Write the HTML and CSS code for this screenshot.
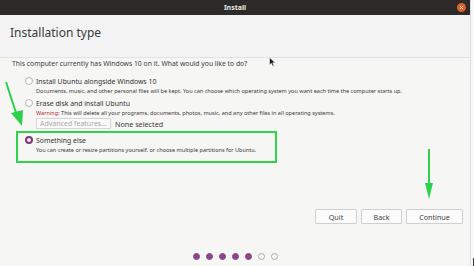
FILE: index.html
```html
<!DOCTYPE html>
<html>
<head>
<meta charset="utf-8">
<link rel="stylesheet" href="styles.css">
</head>
<body>
<div class="screen">
  <div class="app">
    <div class="titlebar">
      <span class="tb-spacer"></span>
      <span class="tb-title">Install</span>
      <span class="tb-close"><svg width="9" height="9" viewBox="0 0 9 9"><circle cx="4.5" cy="4.5" r="4.5" fill="#e0622a"/><path d="M3 3L6 6M6 3L3 6" stroke="#fbe0d0" stroke-width="1"/></svg></span>
    </div>
    <div class="header">Installation type</div>
    <div class="content">
      <p class="question">This computer currently has Windows 10 on it. What would you like to do?</p>
      <div class="option first">
        <div class="opt-row"><span class="radio"></span><span class="opt-label">Install Ubuntu alongside Windows 10</span></div>
        <div class="opt-desc">Documents, music, and other personal files will be kept. You can choose which operating system you want each time the computer starts up.</div>
      </div>
      <div class="option">
        <div class="opt-row"><span class="radio"></span><span class="opt-label">Erase disk and install Ubuntu</span></div>
        <div class="opt-desc"><span class="warn">Warning</span>: This will delete all your programs, documents, photos, music, and any other files in all operating systems.</div>
        <div class="adv-row"><span class="adv-btn">Advanced features...</span><span class="adv-note">None selected</span></div>
      </div>
      <div class="highlight">
        <div class="opt-row"><span class="radio checked"></span><span class="opt-label">Something else</span></div>
        <div class="opt-desc">You can create or resize partitions yourself, or choose multiple partitions for Ubuntu.</div>
      </div>
      <div class="buttons">
        <span class="btn btn-quit">Quit</span>
        <span class="btn btn-back">Back</span>
        <span class="btn btn-continue">Continue</span>
      </div>
      <div class="dots">
        <span class="dot on"></span><span class="dot on"></span><span class="dot on"></span><span class="dot on"></span><span class="dot on"></span><span class="dot"></span><span class="dot"></span>
      </div>
    </div>
    <svg class="arrow arrow-left" width="30" height="60" viewBox="0 0 30 60">
      <path d="M3 2L14 36" stroke="#2bd14a" stroke-width="2"/>
      <path d="M8 33L19 46L20 30Z" fill="#2bd14a"/>
    </svg>
    <svg class="arrow arrow-right" width="12" height="52" viewBox="0 0 12 52">
      <path d="M6 0V36" stroke="#2bd14a" stroke-width="2"/>
      <path d="M2 34L6 50L10 34Z" fill="#2bd14a"/>
    </svg>
    <svg class="cursor" width="7" height="10" viewBox="0 0 7 10">
      <path d="M0.5 0.5V8L2.4 6.3L3.8 9.3L5 8.7L3.7 5.8H6.3Z" fill="#1a1a1a" stroke="#f0f0f0" stroke-width="0.6"/>
    </svg>
  </div>
  <div class="edge"><span class="edge-mark"></span></div>
</div>
</body>
</html>
```
FILE: styles.css
```css
* { box-sizing: border-box; }
html, body { margin: 0; padding: 0; }
body {
  width: 474px;
  height: 266px;
  overflow: hidden;
  font-family: "Noto Sans", "DejaVu Sans", sans-serif;
  background: #f7f7f6;
}
.screen {
  display: flex;
  width: 474px;
  height: 266px;
}
.app {
  position: relative;
  width: 471px;
  height: 266px;
  display: flex;
  flex-direction: column;
  background: #f6f6f5;
  border-right: 1px solid #dcdcdc;
}
.edge {
  flex: 1;
  background: #f9f9f9;
  position: relative;
}
.edge-mark {
  position: absolute;
  right: 0;
  bottom: 0;
  width: 1px;
  height: 8px;
  background: #333;
}
.titlebar {
  height: 15px;
  background: #2c2b2a;
  display: grid;
  grid-template-columns: 1fr auto 1fr;
  align-items: center;
  color: #e8e8e8;
  font-size: 7px;
  font-weight: bold;
}
.tb-title { text-align: center; }
.tb-close {
  justify-self: end;
  margin-right: 4px;
  display: flex;
}
.header {
  height: 43px;
  padding: 9px 0 0 10px;
  font-size: 12px;
  color: #3c3c3c;
  background: #f3f3f3;
  border-bottom: 1px solid #e2e2e2;
}
.content {
  padding: 0 0 0 12px;
  color: #3c3c3c;
  display: flex;
  flex-direction: column;
}
.question {
  margin: 1px 0 0 0;
  font-size: 6.8px;
  line-height: 10px;
}
.option {
  margin-left: 13px;
  display: flex;
  flex-direction: column;
}
.option.first { margin-top: 4px; }
.opt-row {
  display: flex;
  align-items: center;
  height: 12px;
  margin-top: 2px;
}
.radio {
  width: 8px;
  height: 8px;
  border-radius: 50%;
  border: 1px solid #b5b5b5;
  background: #fbfbfb;
  margin-right: 3px;
}
.radio.checked {
  border: 2.5px solid #7b3b78;
  background: #f2e6f0;
}
.opt-label {
  font-size: 6.9px;
  color: #333;
}
.opt-desc {
  font-size: 5.55px;
  line-height: 8px;
  margin-left: 11px;
  color: #3a3a3a;
}
.warn { color: #b03030; }
.adv-row {
  display: flex;
  align-items: center;
  height: 11px;
  margin: 1px 0 0 11px;
}
.adv-btn {
  width: 75px;
  height: 11px;
  border: 1px solid #d6d6d6;
  background: #fafafa;
  color: #a8a8a8;
  font-size: 7px;
  display: flex;
  align-items: center;
  padding-left: 3px;
}
.adv-note {
  font-size: 7.2px;
  margin-left: 4px;
  color: #3a3a3a;
}
.highlight {
  margin: 2px 0 0 4px;
  width: 261px;
  height: 32px;
  border: 2px solid #2fd44c;
  padding: 0 0 0 7px;
  display: flex;
  flex-direction: column;
}
.highlight .opt-row { margin-top: 1px; }
.buttons {
  display: flex;
  justify-content: flex-end;
  gap: 4px;
  margin: 46px 7px 0 0;
}
.btn {
  height: 15px;
  border: 1px solid #d0d0d0;
  border-radius: 1px;
  background: #fbfbfb;
  font-size: 7.2px;
  color: #444;
  display: flex;
  align-items: center;
  justify-content: center;
}
.btn-quit { width: 42px; }
.btn-back { width: 41px; }
.btn-continue { width: 57px; }
.dots {
  display: flex;
  gap: 6px;
  margin: 29px 0 0 181px;
}
.dot {
  width: 7px;
  height: 7px;
  border-radius: 50%;
  border: 1px solid #aaaaaa;
  background: #f6f6f5;
}
.dot.on {
  border-color: #8a4785;
  background: #8a4785;
}
.arrow { position: absolute; }
.arrow-left { left: 3px; top: 80px; }
.arrow-right { left: 423px; top: 149px; }
.cursor { position: absolute; left: 269px; top: 57px; }
```
